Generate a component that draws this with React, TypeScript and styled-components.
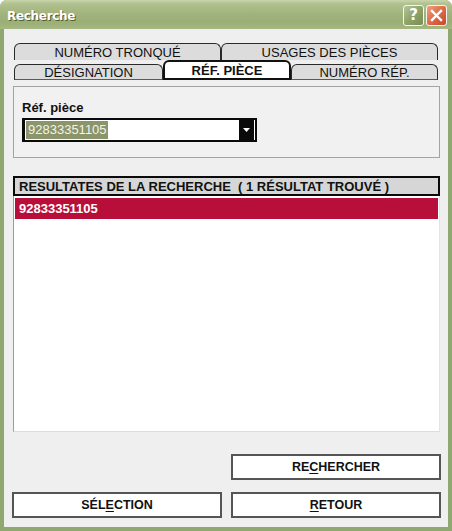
import React from "react";
import styled, { createGlobalStyle } from "styled-components";

const Global = createGlobalStyle`
  html, body { margin: 0; padding: 0; background: #ffffff; }
  * { box-sizing: border-box; }
`;

const Window = styled.div`
  width: 452px;
  height: 531px;
  background: #8fa771;
  border-radius: 7px 7px 0 0;
  display: flex;
  flex-direction: column;
  overflow: hidden;
  font-family: "Liberation Sans", Arial, sans-serif;
`;

const TitleBar = styled.div`
  height: 29px;
  flex: none;
  display: flex;
  align-items: center;
  justify-content: space-between;
  padding: 0 5px 0 7px;
  background: linear-gradient(
    to bottom,
    #c9d5ab 0%,
    #b2c290 12%,
    #a2b47e 45%,
    #9bae76 75%,
    #a5b783 100%
  );
`;

const Title = styled.span`
  font-family: "DejaVu Sans", Verdana, sans-serif;
  font-weight: bold;
  font-size: 12px;
  color: #ffffff;
  text-shadow: 1px 1px 0 #4f5c36;
  letter-spacing: -0.3px;
  margin-top: 2px;
`;

const TitleButtons = styled.div`
  display: flex;
  gap: 2px;
  margin-top: 1px;
`;

const CaptionButton = styled.div<{ $kind: "help" | "close" }>`
  width: 21px;
  height: 21px;
  border: 1px solid #f4f6ee;
  border-radius: 3px;
  display: flex;
  align-items: center;
  justify-content: center;
  color: #ffffff;
  font-family: "DejaVu Sans", Verdana, sans-serif;
  font-weight: bold;
  font-size: 15px;
  background: ${(p) =>
    p.$kind === "help"
      ? "linear-gradient(135deg, #b6c59a 0%, #8ea26a 50%, #788e55 100%)"
      : "linear-gradient(135deg, #f0a183 0%, #df6a47 50%, #c8462a 100%)"};
`;

const Body = styled.div`
  flex: 1;
  margin: 0 4px 4px 4px;
  background: #efefef;
  padding: 14px 8px 0 9px;
  display: flex;
  flex-direction: column;
`;

const TabStrip = styled.div`
  margin: 0 2px 0 1px;
  display: flex;
  flex-direction: column;
`;

const TabRow = styled.div<{ $front?: boolean }>`
  display: flex;
  align-items: flex-end;
  height: ${(p) => (p.$front ? "20px" : "17px")};
  border-bottom: ${(p) => (p.$front ? "1px solid #5a5a5a" : "none")};
`;

const Tab = styled.div<{ $w: number; $active?: boolean; $back?: boolean }>`
  width: ${(p) => p.$w}px;
  flex: none;
  height: ${(p) => (p.$active ? "20px" : p.$back ? "17px" : "16px")};
  margin-bottom: ${(p) => (p.$back ? "0" : "-1px")};
  background: ${(p) => (p.$active ? "#ffffff" : "#dcdcdc")};
  border: ${(p) => (p.$active ? "2px solid #111" : "1px solid #2a2a2a")};
  border-bottom: ${(p) => (p.$back ? "none" : p.$active ? "2px solid #111" : "1px solid #5a5a5a")};
  border-radius: 6px 6px 0 0;
  display: flex;
  align-items: center;
  justify-content: center;
  font-size: 13px;
  font-weight: ${(p) => (p.$active ? "bold" : "normal")};
  color: #111;
  line-height: 1;
  padding-top: 1px;
`;

const Panel = styled.div`
  margin-top: 6px;
  height: 72px;
  border: 1px solid #a3a3a3;
  background: #f1f1f1;
  padding: 13px 0 0 8px;
  display: flex;
  flex-direction: column;
`;

const Label = styled.div`
  font-size: 13px;
  font-weight: bold;
  color: #111;
  line-height: 15px;
`;

const Combo = styled.div`
  margin-top: 3px;
  width: 235px;
  height: 24px;
  border: 2px solid #0a0a0a;
  border-left-width: 3px;
  background: #ffffff;
  display: flex;
  align-items: center;
  justify-content: space-between;
  padding: 0 1px 0 1px;
`;

const Selection = styled.span`
  background: #8b946b;
  color: #f3f3e6;
  font-size: 13px;
  line-height: 18px;
  padding: 0 1px 0 2px;
`;

const DropButton = styled.div`
  width: 15px;
  height: 20px;
  background: #0a0a0a;
  display: flex;
  align-items: center;
  justify-content: center;
`;

const ResultsHeader = styled.div`
  margin-top: 18px;
  height: 20px;
  border: 2px solid #0a0a0a;
  background: #d6d6d6;
  font-size: 13px;
  font-weight: bold;
  color: #111;
  display: flex;
  align-items: center;
  padding-left: 4px;
  white-space: pre;
`;

const List = styled.div`
  height: 236px;
  background: #ffffff;
  border-left: 1px solid #9c9c9c;
  border-bottom: 1px solid #dcdcdc;
  border-right: 1px solid #e4e4e4;
  padding: 2px 1px 0 1px;
`;

const ListItem = styled.div<{ $selected?: boolean }>`
  height: 21px;
  background: ${(p) => (p.$selected ? "#b80f3a" : "transparent")};
  color: ${(p) => (p.$selected ? "#ffffff" : "#111")};
  font-size: 13px;
  font-weight: bold;
  display: flex;
  align-items: center;
  padding-left: 4px;
`;

const ButtonGrid = styled.div<{ $top: number }>`
  margin: ${(p) => p.$top}px -1px 0 -1px;
  display: grid;
  grid-template-columns: 1fr 1fr;
  column-gap: 9px;
`;

const Button = styled.div<{ $col?: number }>`
  grid-column: ${(p) => p.$col ?? "auto"};
  height: 26px;
  border: 2px solid #555555;
  background: #ffffff;
  display: flex;
  align-items: center;
  justify-content: center;
  font-size: 12.5px;
  font-weight: bold;
  color: #111;
`;

const Mnemonic = styled.span`
  text-decoration: underline;
  text-underline-offset: 2px;
`;

export default function App() {
  return (
    <>
      <Global />
      <Window>
        <TitleBar>
          <Title>Recherche</Title>
          <TitleButtons>
            <CaptionButton $kind="help">?</CaptionButton>
            <CaptionButton $kind="close">
              <svg width="13" height="13" viewBox="0 0 13 13">
                <path d="M2 2 L11 11 M11 2 L2 11" stroke="#ffffff" strokeWidth="2.4" strokeLinecap="square" />
              </svg>
            </CaptionButton>
          </TitleButtons>
        </TitleBar>
        <Body>
          <TabStrip>
            <TabRow>
              <Tab $w={207} $back>NUMÉRO TRONQUÉ</Tab>
              <Tab $w={217} $back>USAGES DES PIÈCES</Tab>
            </TabRow>
            <TabRow $front>
              <Tab $w={149}>DÉSIGNATION</Tab>
              <Tab $w={128} $active>RÉF. PIÈCE</Tab>
              <Tab $w={147}>NUMÉRO RÉP.</Tab>
            </TabRow>
          </TabStrip>
          <Panel>
            <Label>Réf. pièce</Label>
            <Combo>
              <Selection>92833351105</Selection>
              <DropButton>
                <svg width="7" height="4" viewBox="0 0 7 4">
                  <path d="M0 0 H7 L3.5 4 Z" fill="#ffffff" />
                </svg>
              </DropButton>
            </Combo>
          </Panel>
          <ResultsHeader>RESULTATES DE LA RECHERCHE  ( 1 RÉSULTAT TROUVÉ )</ResultsHeader>
          <List>
            <ListItem $selected>92833351105</ListItem>
          </List>
          <ButtonGrid $top={22}>
            <Button $col={2}>
              RE<Mnemonic>C</Mnemonic>HERCHER
            </Button>
          </ButtonGrid>
          <ButtonGrid $top={12}>
            <Button>
              SÉL<Mnemonic>E</Mnemonic>CTION
            </Button>
            <Button>
              <Mnemonic>R</Mnemonic>ETOUR
            </Button>
          </ButtonGrid>
        </Body>
      </Window>
    </>
  );
}
